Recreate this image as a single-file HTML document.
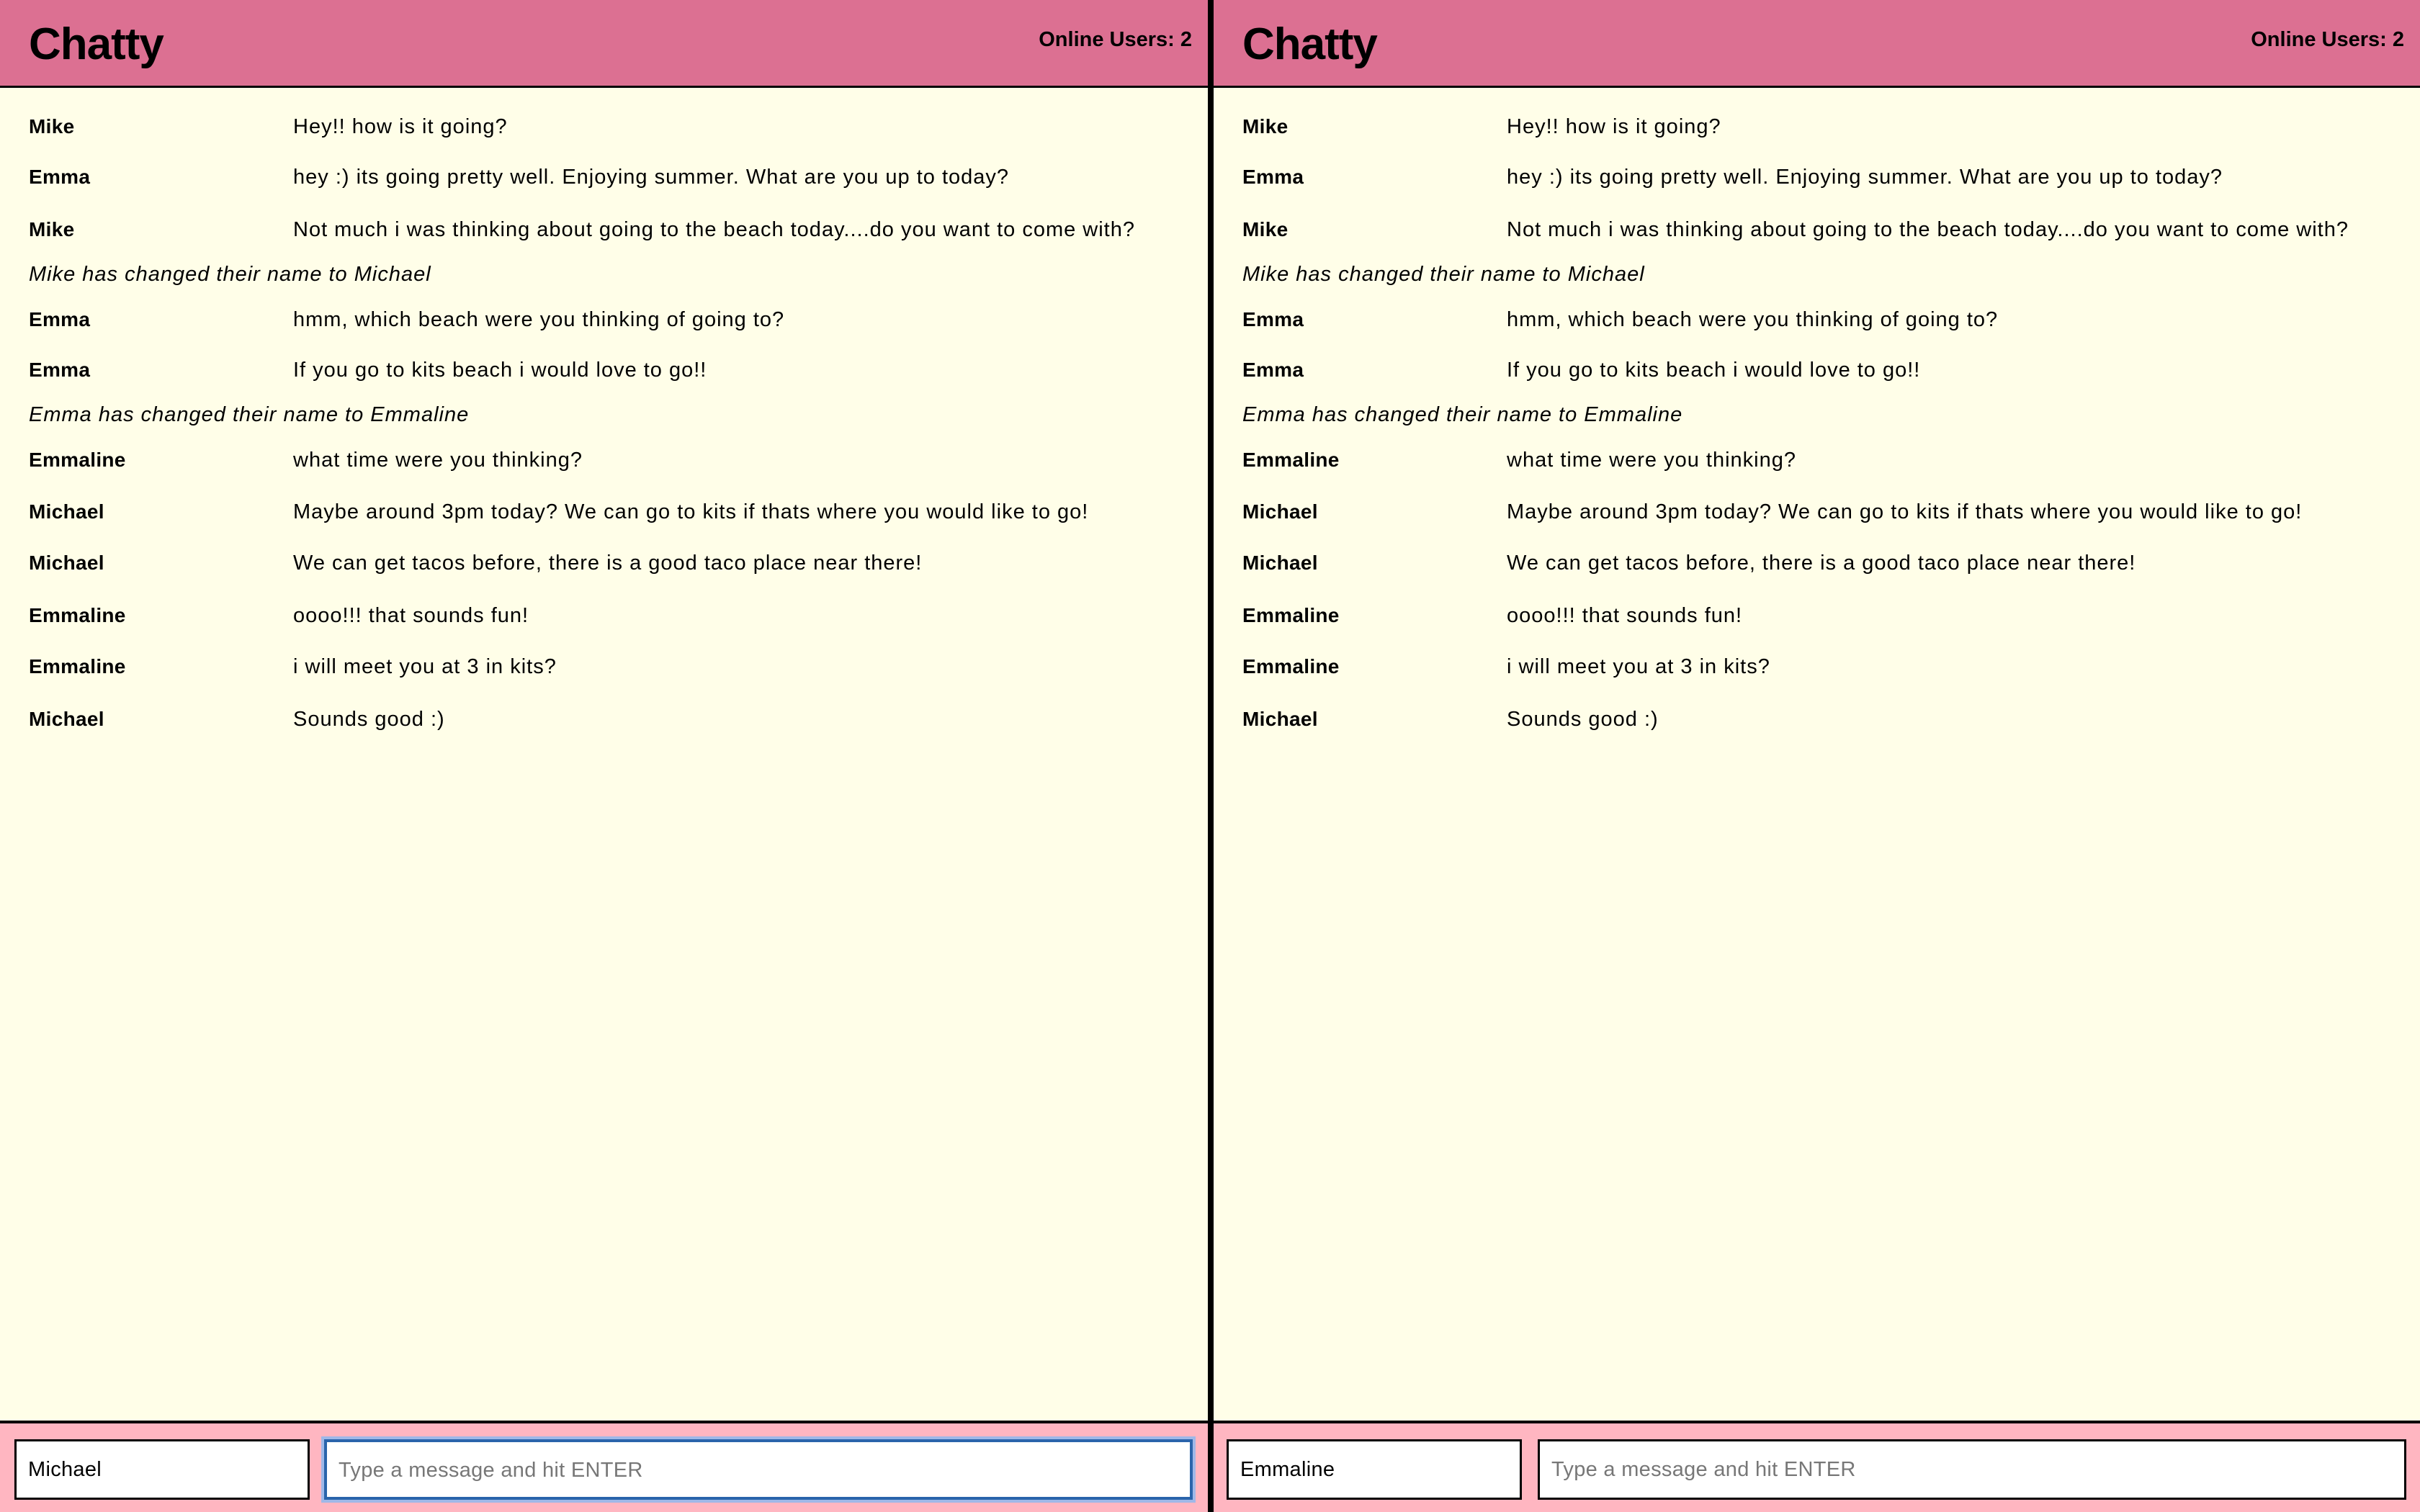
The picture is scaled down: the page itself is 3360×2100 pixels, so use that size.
<!DOCTYPE html>
<html><head><meta charset="utf-8"><style>
*{margin:0;padding:0;box-sizing:border-box}
body{width:3360px;height:2100px;overflow:hidden;background:#fffee8;font-family:"Liberation Sans","DejaVu Sans",sans-serif;position:relative;color:#000}
.p{position:absolute;top:0;height:2100px;background:#fffee8}
.hd{position:absolute;left:0;right:0;top:0;height:122px;background:#dc7092;border-bottom:3px solid #000}
.t{position:absolute;left:40px;top:26px;font-size:62px;font-weight:bold;letter-spacing:-1px}
.ou{position:absolute;right:22px;top:39px;font-size:29px;font-weight:bold}
.r{position:absolute;left:40px;height:40px;line-height:40px;font-size:29px;letter-spacing:1px;white-space:nowrap}
.r b{position:absolute;left:0;font-size:28px;letter-spacing:0.3px}
.r span{position:absolute;left:367px}
.i{font-style:italic}
.ft{position:absolute;left:0;right:0;top:1973px;height:127px;background:#ffb6c1;border-top:4px solid #000}
.in{position:absolute;top:22px;height:84px;background:#fff;border:3px solid #000;font-size:29px;line-height:78px;padding-left:16px;letter-spacing:0.3px}
.ph{color:#777}
.foc{border:4px solid #2a64ab;box-shadow:0 0 0 4px #9fb8e8}
.dv{position:absolute;left:1677px;top:0;width:8px;height:2100px;background:#000}
</style></head><body>

<div class="p" style="left:0;width:1677px">
 <div class="hd"><div class="t">Chatty</div><div class="ou">Online Users: 2</div></div>
 <div class="r" style="top:156px"><b>Mike</b><span>Hey!! how is it going?</span></div>
 <div class="r" style="top:226px"><b>Emma</b><span>hey :) its going pretty well. Enjoying summer. What are you up to today?</span></div>
 <div class="r" style="top:299px"><b>Mike</b><span>Not much i was thinking about going to the beach today....do you want to come with?</span></div>
 <div class="r i" style="top:361px">Mike has changed their name to Michael</div>
 <div class="r" style="top:424px"><b>Emma</b><span>hmm, which beach were you thinking of going to?</span></div>
 <div class="r" style="top:494px"><b>Emma</b><span>If you go to kits beach i would love to go!!</span></div>
 <div class="r i" style="top:556px">Emma has changed their name to Emmaline</div>
 <div class="r" style="top:619px"><b>Emmaline</b><span>what time were you thinking?</span></div>
 <div class="r" style="top:691px"><b>Michael</b><span>Maybe around 3pm today? We can go to kits if thats where you would like to go!</span></div>
 <div class="r" style="top:762px"><b>Michael</b><span>We can get tacos before, there is a good taco place near there!</span></div>
 <div class="r" style="top:835px"><b>Emmaline</b><span>oooo!!! that sounds fun!</span></div>
 <div class="r" style="top:906px"><b>Emmaline</b><span>i will meet you at 3 in kits?</span></div>
 <div class="r" style="top:979px"><b>Michael</b><span>Sounds good :)</span></div>
 <div class="ft">
  <div class="in" style="left:20px;width:410px">Michael</div>
  <div class="in ph foc" style="left:450px;width:1206px">Type a message and hit ENTER</div>
 </div>
</div>

<div class="dv"></div>

<div class="p" style="left:1685px;width:1675px">
 <div class="hd"><div class="t">Chatty</div><div class="ou">Online Users: 2</div></div>
 <div class="r" style="top:156px"><b>Mike</b><span>Hey!! how is it going?</span></div>
 <div class="r" style="top:226px"><b>Emma</b><span>hey :) its going pretty well. Enjoying summer. What are you up to today?</span></div>
 <div class="r" style="top:299px"><b>Mike</b><span>Not much i was thinking about going to the beach today....do you want to come with?</span></div>
 <div class="r i" style="top:361px">Mike has changed their name to Michael</div>
 <div class="r" style="top:424px"><b>Emma</b><span>hmm, which beach were you thinking of going to?</span></div>
 <div class="r" style="top:494px"><b>Emma</b><span>If you go to kits beach i would love to go!!</span></div>
 <div class="r i" style="top:556px">Emma has changed their name to Emmaline</div>
 <div class="r" style="top:619px"><b>Emmaline</b><span>what time were you thinking?</span></div>
 <div class="r" style="top:691px"><b>Michael</b><span>Maybe around 3pm today? We can go to kits if thats where you would like to go!</span></div>
 <div class="r" style="top:762px"><b>Michael</b><span>We can get tacos before, there is a good taco place near there!</span></div>
 <div class="r" style="top:835px"><b>Emmaline</b><span>oooo!!! that sounds fun!</span></div>
 <div class="r" style="top:906px"><b>Emmaline</b><span>i will meet you at 3 in kits?</span></div>
 <div class="r" style="top:979px"><b>Michael</b><span>Sounds good :)</span></div>
 <div class="ft">
  <div class="in" style="left:18px;width:410px">Emmaline</div>
  <div class="in ph" style="left:450px;width:1206px">Type a message and hit ENTER</div>
 </div>
</div>

</body></html>
